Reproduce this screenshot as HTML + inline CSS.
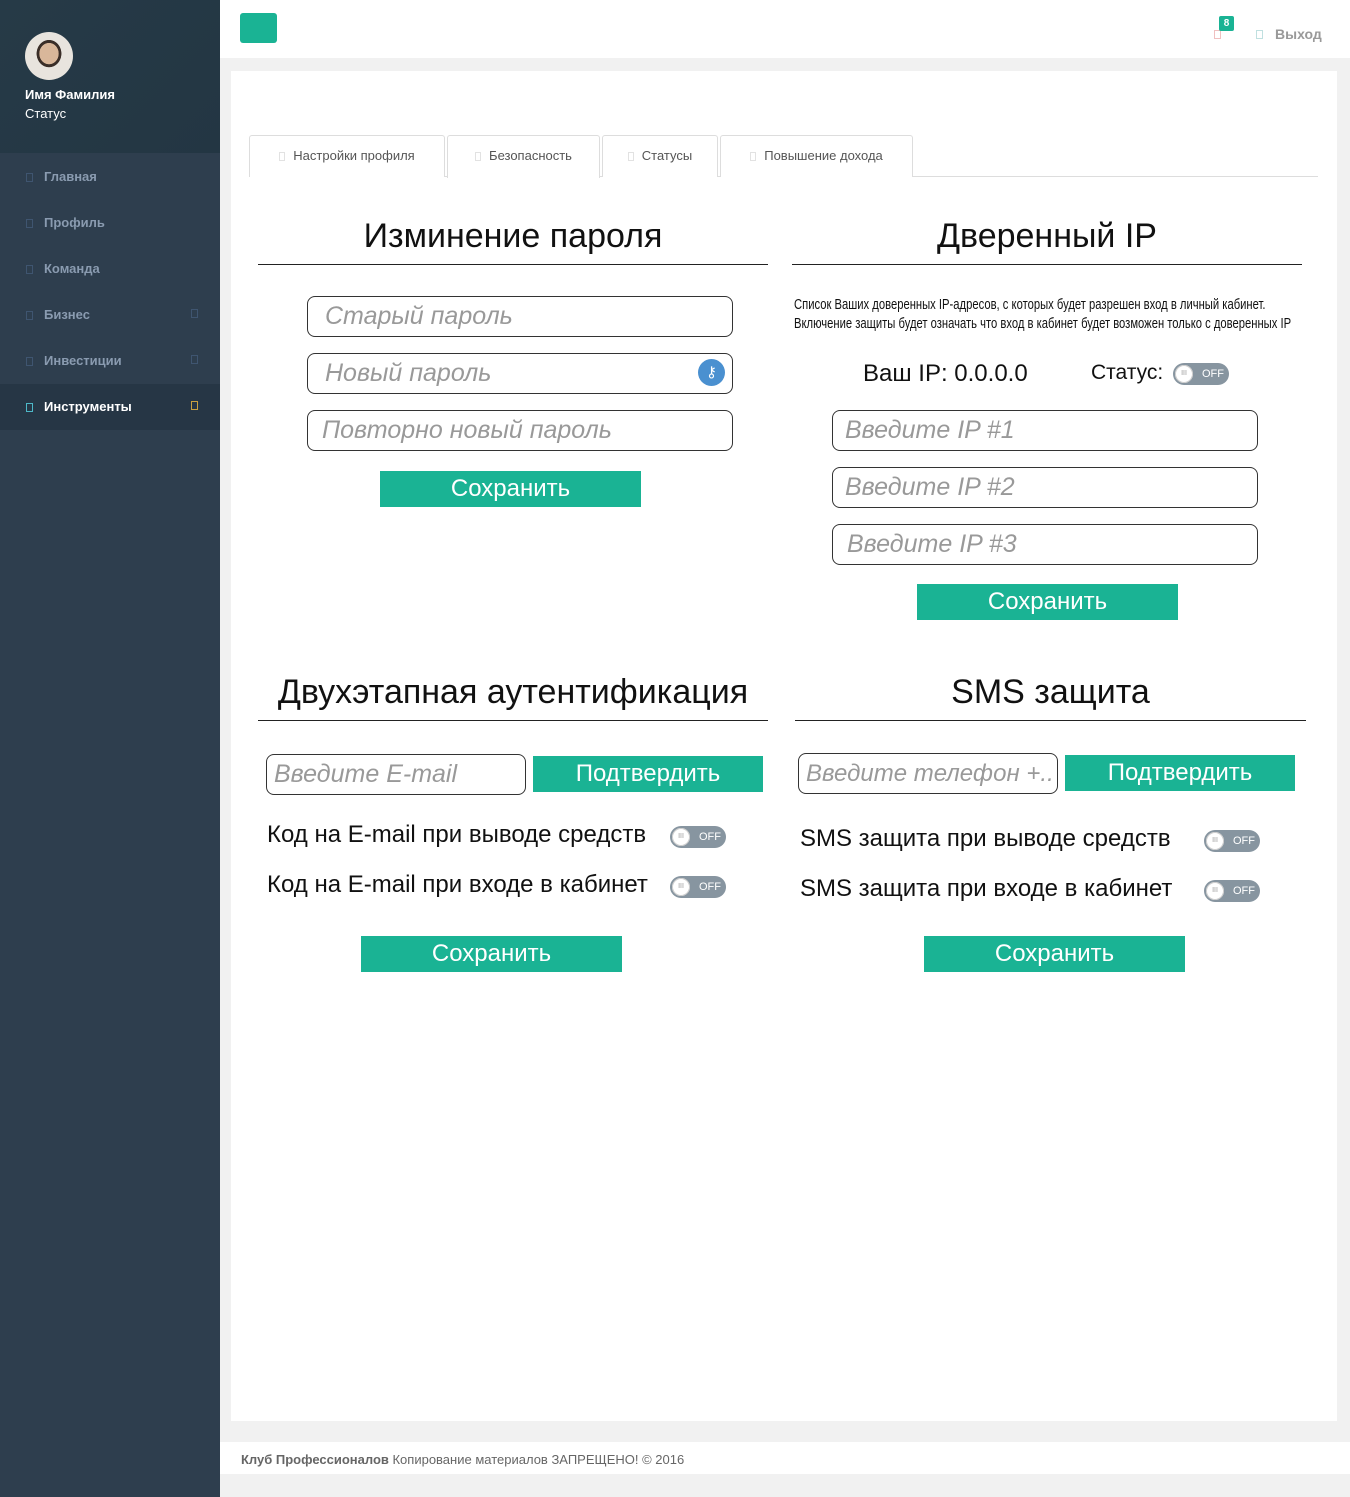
<!DOCTYPE html>
<html><head><meta charset="utf-8">
<style>
*{margin:0;padding:0;box-sizing:border-box}
body{width:1350px;height:1497px;background:#f1f1f1;font-family:"Liberation Sans","DejaVu Sans",sans-serif;position:relative;overflow:hidden}
.a{position:absolute;white-space:nowrap}
#side{left:0;top:0;width:220px;height:1497px;background:#2e3e4e}
#sideTop{left:0;top:0;width:220px;height:153px;background:linear-gradient(135deg,#263a47,#233643)}
.nav{left:0;width:220px;height:46px;color:#8a9bb0;font-size:13px;font-weight:bold;line-height:46px;padding-left:44px}
.nav i{position:absolute;left:26px;top:19px;width:7px;height:9px;border:1px solid #3f5570}
.nav b{position:absolute;left:191px;top:17px;width:7px;height:9px;border:1px solid #3f5570}
.in{border:1px solid #333;border-radius:8px;background:#fff;font-style:italic;color:#999;font-size:25px;padding-left:17px;line-height:39px}
.btn{background:#1ab394;color:#fff;font-size:24px;text-align:center;line-height:36px}
.h{font-size:34px;color:#111;text-align:center;width:510px;border-bottom:1px solid #222;height:50px;line-height:42px}
.tg{width:56px;height:22px;border-radius:11px;background:#8795a0}
.tg::before{content:"III";position:absolute;left:2px;top:2px;width:18px;height:18px;border-radius:50%;background:#fff;font-size:7px;color:#999;text-align:center;line-height:18px;box-shadow:0 0 0 1px #ccc inset}
.tg::after{content:"OFF";position:absolute;left:29px;top:5px;font-size:11px;color:#fff}
.tx{font-size:24px;color:#111}
.tab{top:135px;height:42px;border:1px solid #ddd;border-bottom:none;border-radius:3px 3px 0 0;background:#fff;font-size:13px;color:#555;line-height:40px;text-align:center}
.tab s{display:inline-block;width:6px;height:9px;border:1px solid #e2e2e2;margin-right:8px;vertical-align:-1px}
</style></head><body>
<div class="a" id="side"></div>
<div class="a" id="sideTop"></div>
<div class="a" style="left:25px;top:32px;width:48px;height:48px;border-radius:50%;background:radial-gradient(ellipse at 50% 45%,#d9b79a 0 28%,#3a2e28 29% 36%,#e8e4de 37%)"></div>
<div class="a" style="left:25px;top:87px;color:#fff;font-size:13px;font-weight:bold">Имя Фамилия</div>
<div class="a" style="left:25px;top:106px;color:#fff;font-size:13px">Статус</div>
<div class="a nav" style="top:154px"><i></i>Главная</div>
<div class="a nav" style="top:200px"><i></i>Профиль</div>
<div class="a nav" style="top:246px"><i></i>Команда</div>
<div class="a nav" style="top:292px"><i></i>Бизнес<b></b></div>
<div class="a nav" style="top:338px"><i></i>Инвестиции<b></b></div>
<div class="a nav" style="top:384px;background:#263645;color:#fff"><i style="border-color:#4db8c8"></i>Инструменты<b style="border-color:#c9a040"></b></div>

<div class="a" style="left:220px;top:0;width:1130px;height:58px;background:#fff"></div>
<div class="a" style="left:240px;top:13px;width:37px;height:30px;background:#1ab394;border-radius:3px"></div>
<div class="a" style="left:1214px;top:30px;width:7px;height:9px;border:1px solid #f0c0c0"></div>
<div class="a" style="left:1219px;top:16px;width:15px;height:15px;background:#1ab394;border-radius:2px;color:#fff;font-size:10px;font-weight:bold;text-align:center;line-height:15px">8</div>
<div class="a" style="left:1256px;top:30px;width:7px;height:9px;border:1px solid #c0e0e0"></div>
<div class="a" style="left:1275px;top:26px;color:#999;font-size:14px;font-weight:bold">Выход</div>

<div class="a" style="left:231px;top:71px;width:1106px;height:1350px;background:#fff"></div>
<div class="a" style="left:249px;top:176px;width:1069px;height:1px;background:#ddd"></div>
<div class="a tab" style="left:249px;width:196px"><s></s>Настройки профиля</div>
<div class="a tab" style="left:447px;width:153px;height:43px"><s></s>Безопасность</div>
<div class="a tab" style="left:602px;width:116px"><s></s>Статусы</div>
<div class="a tab" style="left:720px;width:193px"><s></s>Повышение дохода</div>

<div class="a h" style="left:258px;top:215px">Изминение пароля</div>
<div class="a h" style="left:792px;top:215px">Дверенный IP</div>
<div class="a in" style="left:307px;top:296px;width:426px;height:41px">Старый пароль</div>
<div class="a in" style="left:307px;top:353px;width:426px;height:41px">Новый пароль</div>
<div class="a" style="left:698px;top:359px;width:27px;height:27px;border-radius:50%;background:#4a90d0;color:#fff;font-size:15px;text-align:center;line-height:27px">⚷</div>
<div class="a in" style="left:307px;top:410px;width:426px;height:41px;padding-left:14px">Повторно новый пароль</div>
<div class="a btn" style="left:380px;top:471px;width:261px;height:36px">Сохранить</div>

<div class="a" style="left:794px;top:296px;font-size:14.5px;color:#111;line-height:19px;transform:scaleX(0.775);transform-origin:left;width:700px">Список Ваших доверенных IP-адресов, с которых будет разрешен вход в личный кабинет.<br>Включение защиты будет означать что вход в кабинет будет возможен только с доверенных IP</div>
<div class="a tx" style="left:863px;top:360px">Ваш IP: 0.0.0.0</div>
<div class="a tx" style="left:1091px;top:361px;font-size:21px">Статус:</div>
<div class="a tg" style="left:1173px;top:363px"></div>
<div class="a in" style="left:832px;top:410px;width:426px;height:41px;padding-left:12px">Введите IP #1</div>
<div class="a in" style="left:832px;top:467px;width:426px;height:41px;padding-left:12px">Введите IP #2</div>
<div class="a in" style="left:832px;top:524px;width:426px;height:41px;padding-left:14px">Введите IP #3</div>
<div class="a btn" style="left:917px;top:584px;width:261px;height:36px">Сохранить</div>

<div class="a h" style="left:258px;top:671px">Двухэтапная аутентификация</div>
<div class="a h" style="left:795px;top:671px;width:511px">SMS защита</div>
<div class="a in" style="left:266px;top:754px;width:260px;height:41px;padding-left:7px">Введите E-mail</div>
<div class="a btn" style="left:533px;top:756px;width:230px;height:36px">Подтвердить</div>
<div class="a in" style="left:798px;top:753px;width:260px;height:41px;padding-left:7px;overflow:hidden;font-size:24px">Введите телефон +..</div>
<div class="a btn" style="left:1065px;top:755px;width:230px;height:36px">Подтвердить</div>

<div class="a tx" style="left:267px;top:821px">Код на E-mail при выводе средств</div>
<div class="a tg" style="left:670px;top:826px"></div>
<div class="a tx" style="left:267px;top:871px">Код на E-mail при входе в кабинет</div>
<div class="a tg" style="left:670px;top:876px"></div>
<div class="a tx" style="left:800px;top:825px">SMS защита при выводе средств</div>
<div class="a tg" style="left:1204px;top:830px"></div>
<div class="a tx" style="left:800px;top:875px">SMS защита при входе в кабинет</div>
<div class="a tg" style="left:1204px;top:880px"></div>
<div class="a btn" style="left:361px;top:936px;width:261px;height:36px">Сохранить</div>
<div class="a btn" style="left:924px;top:936px;width:261px;height:36px">Сохранить</div>

<div class="a" style="left:220px;top:1442px;width:1130px;height:32px;background:#fff"></div>
<div class="a" style="left:241px;top:1452px;font-size:13px;color:#666"><b>Клуб Профессионалов</b> Копирование материалов ЗАПРЕЩЕНО! © 2016</div>
</body></html>
